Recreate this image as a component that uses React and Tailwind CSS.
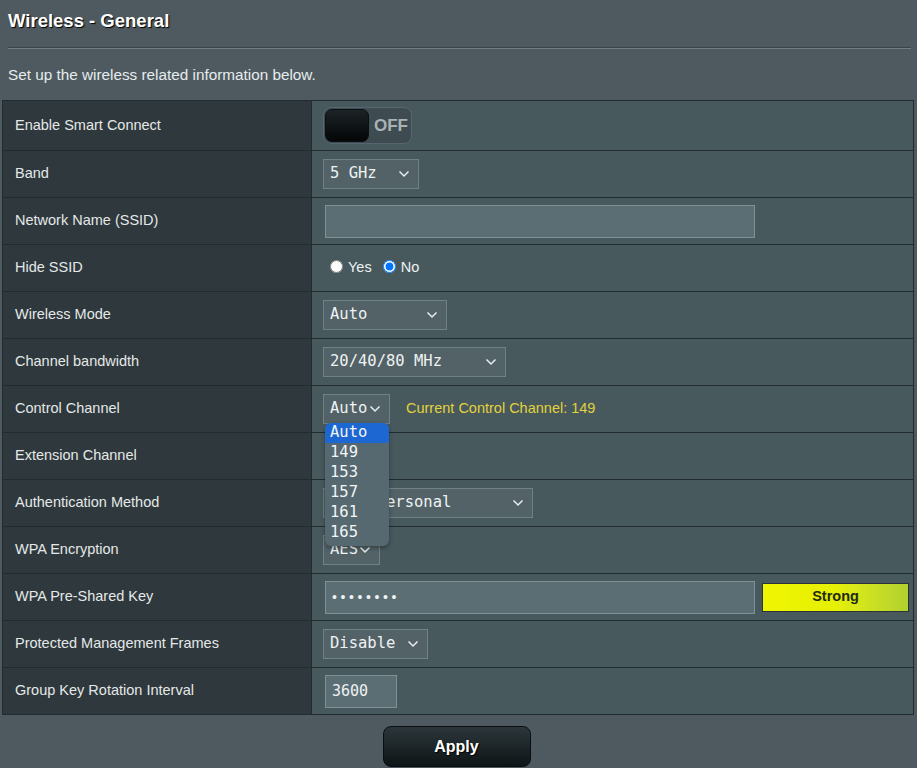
import React from "react";

const MONO = "font-['DejaVu_Sans_Mono',monospace]";

function Chevron() {
  return (
    <svg width="12" height="8" viewBox="0 0 12 8" className="shrink-0">
      <path d="M1.5 1.5 L6 6 L10.5 1.5" fill="none" stroke="#e8eef0" strokeWidth="1.5" />
    </svg>
  );
}

function Select({ value, width, children }) {
  return (
    <div className="relative" style={{ width }}>
      <div
        className={`h-[30px] flex items-center justify-between pl-[6px] pr-[8px] bg-[#526267] border border-[#6e8186] text-[15.5px] text-[#eef2f3] ${MONO}`}
      >
        <span className="whitespace-nowrap">{value}</span>
        <Chevron />
      </div>
      {children}
    </div>
  );
}

function TextBox({ value, width, mono, dots }) {
  return (
    <div
      className={`h-[33px] flex items-center px-[6px] bg-[#5b6e74] border border-[#7f9196] text-[#eef2f3] ${mono ? MONO + " text-[15px]" : ""}`}
      style={{ width }}
    >
      {dots ? <span className="tracking-[3.6px] text-[14px]">••••••••</span> : value}
    </div>
  );
}

function Row({ label, children, tall }) {
  return (
    <div className={`grid grid-cols-[309px_1fr] border-b border-[#222b2f] ${tall ? "h-[50px]" : "h-[47px]"}`}>
      <div className="bg-[#2f383c] border-r border-[#222b2f] flex items-center pl-[12px] text-[14.5px] text-[#e4e8e9]">
        {label}
      </div>
      <div className="bg-[#48595e] flex items-center pl-[11px] gap-[16px]">{children}</div>
    </div>
  );
}

export default function App() {
  const channels = ["Auto", "149", "153", "157", "161", "165"];
  return (
    <div className="min-h-[768px] w-[917px] bg-[#4e5a5f] font-['Liberation_Sans',Arial,sans-serif] overflow-hidden">
      <div className="px-[8px] pt-[10px]">
        <h1 className="text-[18.5px] font-bold text-white leading-[22px] [text-shadow:1px_1px_1px_#000]">
          Wireless - General
        </h1>
        <div className="mt-[15px] h-[2px] mr-[-2px] border-t border-[#39444a] bg-[#6f7f84]" />
        <p className="mt-[17px] text-[15.3px] text-[#e6ecee] leading-[18px]">
          Set up the wireless related information below.
        </p>
      </div>

      <div className="mt-[16px] ml-[2px] w-[912px] border border-[#222b2f] border-b-0">
        <Row label="Enable Smart Connect" tall>
          <div className="w-[89px] h-[37px] rounded-[8px] bg-[#3e4b50] border border-[#566670] flex items-center p-[1px]">
            <div className="w-[44px] h-[33px] rounded-[7px] bg-gradient-to-b from-[#1c2326] to-[#050708] border border-[#0b0f10]" />
            <span className="ml-[5px] text-[17px] font-bold text-[#a9b2b5]">OFF</span>
          </div>
        </Row>
        <Row label="Band">
          <Select value="5 GHz" width="96px" />
        </Row>
        <Row label="Network Name (SSID)">
          <div className="pl-[2px]">
            <TextBox width="430px" />
          </div>
        </Row>
        <Row label="Hide SSID">
          <div className="flex items-center text-[14.5px] text-[#eef2f3] pl-[7px]">
            <input type="radio" name="hide" readOnly className="w-[13px] h-[13px] m-0 mr-[5px] -mt-[3px]" />
            <span className="mr-[11px]">Yes</span>
            <input type="radio" name="hide" checked readOnly className="w-[13px] h-[13px] m-0 mr-[5px] -mt-[3px]" />
            <span>No</span>
          </div>
        </Row>
        <Row label="Wireless Mode">
          <Select value="Auto" width="124px" />
        </Row>
        <Row label="Channel bandwidth">
          <Select value="20/40/80 MHz" width="183px" />
        </Row>
        <Row label="Control Channel">
          <Select value="Auto" width="67px">
            <div className={`absolute left-[2px] top-[29px] z-10 w-[64px] h-[123px] bg-[#566870] rounded-[6px] shadow-[0_2px_4px_rgba(0,0,0,0.35)] text-[15.5px] text-[#f2f5f6] ${MONO}`}>
              {channels.map((c, i) => (
                <div
                  key={c}
                  className={`h-[20px] leading-[19px] pl-[5px] ${i === 0 ? "bg-[#1d67d2] rounded-t-[6px] rounded-br-[2px]" : ""}`}
                >
                  {c}
                </div>
              ))}
            </div>
          </Select>
          <span className="text-[14.5px] text-[#e2d23a]">Current Control Channel: 149</span>
        </Row>
        <Row label="Extension Channel" />
        <Row label="Authentication Method">
          <Select value="WPA2-Personal" width="210px" />
        </Row>
        <Row label="WPA Encryption">
          <Select value="AES" width="57px" />
        </Row>
        <Row label="WPA Pre-Shared Key">
          <div className="flex items-center gap-[7px] pl-[2px]">
            <TextBox width="430px" dots />
            <div className="w-[147px] h-[29px] border border-[#2b3336] bg-gradient-to-r from-[#f0f500] via-[#e6f004] to-[#b2d12e] flex items-center justify-center text-[14.5px] font-bold text-[#222a10]">
              Strong
            </div>
          </div>
        </Row>
        <Row label="Protected Management Frames">
          <Select value="Disable" width="105px" />
        </Row>
        <Row label="Group Key Rotation Interval">
          <div className="pl-[2px]">
            <TextBox width="72px" value="3600" mono />
          </div>
        </Row>
      </div>

      <div className="flex justify-center pt-[11px]">
        <button className="ml-[-4px] w-[148px] h-[41px] rounded-[8px] bg-gradient-to-b from-[#2c373b] to-[#0f1517] border border-[#0a0e10] text-[16px] font-bold text-white [text-shadow:1px_1px_1px_#000]">
          Apply
        </button>
      </div>
    </div>
  );
}
